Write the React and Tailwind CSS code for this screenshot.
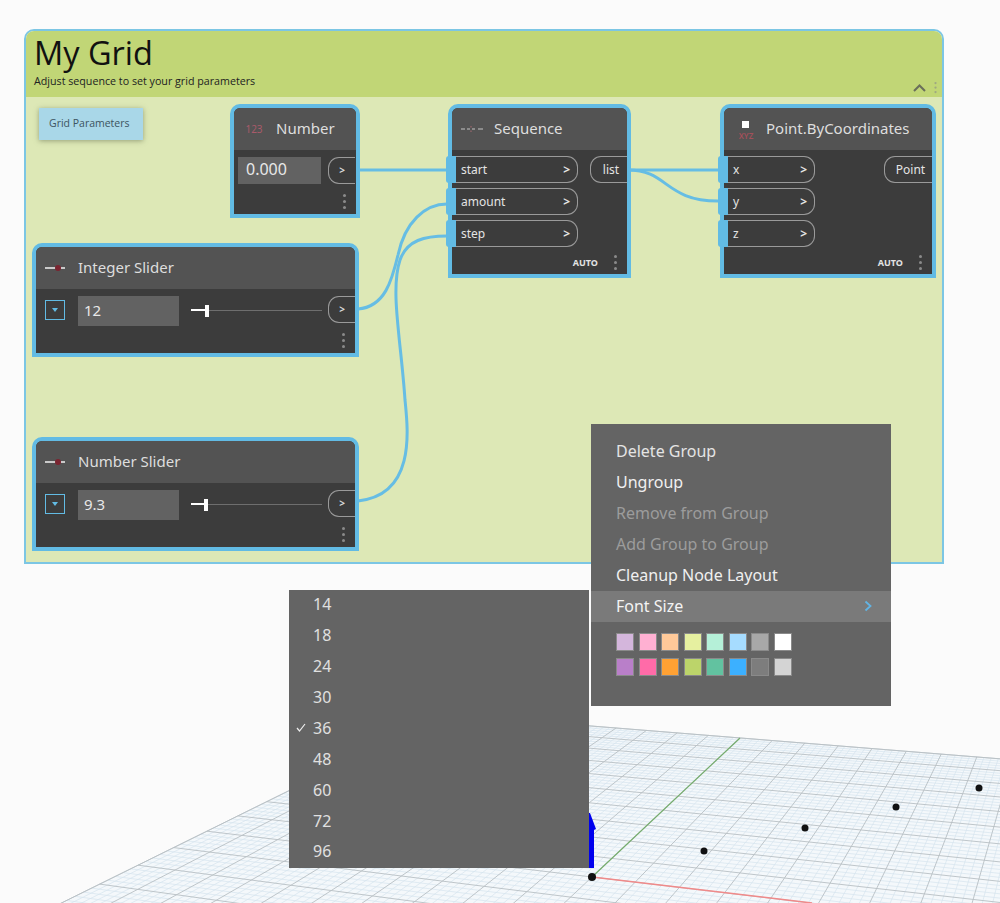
import React from 'react';

const BLUE = 'border-[#62bbe4]';

// plane projection: u goes along the red axis, v along the green one
const project = (u, v) => {
  const a = -0.1098 * u;
  const b = 0.3885 * v;
  const w = 1 + a + b;
  return [(592 - 3300 * a + 1121 * b) / w, (877 + 414 * a + 380 * b) / w];
};

const gridPath = (major) => {
  const per = 10;
  const steps = major ? per : per * 5;
  let d = '';
  for (let i = -steps; i <= steps; i++) {
    if (!major && i % 5 === 0) continue;
    const t = i / steps;
    const [x1, y1] = project(t, -1);
    const [x2, y2] = project(t, 1);
    const [x3, y3] = project(-1, t);
    const [x4, y4] = project(1, t);
    d += `M${x1.toFixed(1)} ${y1.toFixed(1)}L${x2.toFixed(1)} ${y2.toFixed(1)}`;
    d += `M${x3.toFixed(1)} ${y3.toFixed(1)}L${x4.toFixed(1)} ${y4.toFixed(1)}`;
  }
  return d;
};

function Viewport() {
  const corners = [project(-1, -1), project(1, -1), project(1, 1), project(-1, 1)]
    .map((p) => p.map((n) => n.toFixed(1)).join(','))
    .join(' ');
  return (
    <svg className="absolute left-0 top-0 w-[1000px] h-[903px]" viewBox="0 0 1000 903">
      <polygon points={corners} fill="#f4f8fb" stroke="#c9d0d4" strokeWidth="1" />
      <path d={gridPath(false)} stroke="#d6e4ee" strokeWidth="0.7" fill="none" />
      <path d={gridPath(true)} stroke="#b8c0c4" strokeWidth="0.9" fill="none" />
      <line x1="592" y1="877" x2="740" y2="738" stroke="#76ad6e" strokeWidth="1.2" />
      <line x1="592" y1="877" x2="812" y2="903" stroke="#f08a8a" strokeWidth="1.5" />
      <polygon points="589,868 594,868 594,830 596,829 590,813 589,813" fill="#0000ee" />
      <circle cx="592" cy="877" r="4" fill="#111" />
      <circle cx="704" cy="851" r="3.5" fill="#111" />
      <circle cx="805" cy="828" r="3.5" fill="#111" />
      <circle cx="896" cy="807" r="3.5" fill="#111" />
      <circle cx="979" cy="788" r="3.5" fill="#111" />
    </svg>
  );
}

function Dots() {
  return (
    <div className="flex flex-col gap-[3px]">
      <span className="w-[3px] h-[3px] rounded-full bg-[#8a8a8a]"></span>
      <span className="w-[3px] h-[3px] rounded-full bg-[#8a8a8a]"></span>
      <span className="w-[3px] h-[3px] rounded-full bg-[#8a8a8a]"></span>
    </div>
  );
}

function SliderIcon() {
  return (
    <svg width="22" height="8" viewBox="0 0 22 8">
      <line x1="0" y1="4" x2="20" y2="4" stroke="#e8e8e8" strokeWidth="1.6" />
      <circle cx="13" cy="4" r="3" fill="#7a2430" />
    </svg>
  );
}

function SequenceIcon() {
  return (
    <svg width="22" height="8" viewBox="0 0 22 8">
      <path d="M0 4h4M6 4h3M11 4h3M17 4h5" stroke="#c4c4c4" strokeWidth="1.2" />
      <path d="M10 1v1.5M10 5.5v1.5" stroke="#a86a72" strokeWidth="1" />
    </svg>
  );
}

function PointIcon() {
  return (
    <div className="flex flex-col items-center ml-1 mt-1">
      <span className="w-[7px] h-[7px] bg-white"></span>
      <span className="text-[8px] leading-[10px] mt-[3px] text-[#a4505a] font-semibold">XYZ</span>
    </div>
  );
}

function Node({ pos, title, icon, children }) {
  return (
    <div className={`absolute ${pos} flex flex-col border-4 ${BLUE} rounded-t-[10px] bg-[#3c3c3c]`}>
      <div className="h-[42px] shrink-0 flex items-center rounded-t-[6px] bg-[#535353]">
        <div className="w-[40px] shrink-0 flex justify-center">{icon}</div>
        <span className="ml-[2px] pb-[2px] text-[15px] text-[#dedede] whitespace-nowrap">{title}</span>
      </div>
      {children}
    </div>
  );
}

function InPort({ label, width }) {
  return (
    <div className={`relative h-[27px] ${width} flex items-center justify-between pl-[6px] pr-[7px] border border-l-0 border-[#9a9a9a] rounded-r-[11px]`}>
      <span className="absolute -left-[9px] -top-px w-[10px] h-[27px] bg-[#62bbe4] rounded-l-[3px]"></span>
      <span className="text-[12px] text-[#e4e4e4]">{label}</span>
      <span className="text-[12px] font-bold text-[#e4e4e4]">&gt;</span>
    </div>
  );
}

function OutPort({ label, width }) {
  return (
    <div className={`h-[27px] ${width} flex items-center justify-center pl-1 border border-r-0 border-[#9a9a9a] rounded-l-[11px]`}>
      <span className="text-[12px] text-[#e4e4e4]">{label}</span>
    </div>
  );
}

function SmallOut() {
  return (
    <div className="h-[27px] w-[27px] shrink-0 flex items-center justify-center border border-r-0 border-[#9a9a9a] rounded-l-[11px]">
      <span className="text-[10px] font-bold text-[#d8d8d8]">&gt;</span>
    </div>
  );
}

function FunctionFooter() {
  return (
    <div className="mt-auto mb-1 mr-[10px] flex items-center justify-end">
      <span className="mr-[16px] text-[9px] font-bold text-[#e4e4e4]">AUTO</span>
      <Dots />
    </div>
  );
}

function SliderBody({ value, thumb }) {
  return (
    <>
      <div className="flex items-start pt-[7px]">
        <div className="ml-[9px] mt-[4px] w-[20px] h-[20px] shrink-0 flex items-center justify-center border border-[#62bbe4]">
          <span className="w-0 h-0 border-x-[3px] border-x-transparent border-t-[4px] border-t-[#62bbe4]"></span>
        </div>
        <div className="ml-[13px] w-[101px] h-[30px] shrink-0 flex items-center pl-[6px] pb-[2px] bg-[#626262] text-[15px] text-[#e8e8e8]">
          {value}
        </div>
        <div className="relative ml-[12px] mt-[14px] w-[131px] h-px shrink-0 bg-[#6e6e6e]">
          <span className={`absolute left-0 -top-px h-[2px] ${thumb === 13 ? 'w-[13px]' : 'w-[16px]'} bg-white`}></span>
          <span className={`absolute ${thumb === 13 ? 'left-[13px]' : 'left-[14px]'} -top-[5px] w-[4px] h-[12px] bg-white`}></span>
        </div>
        <div className="ml-[6px]">
          <SmallOut />
        </div>
      </div>
      <div className="mt-auto mb-[5px] mr-[10px] flex justify-end">
        <Dots />
      </div>
    </>
  );
}

function Wires() {
  return (
    <svg className="absolute left-0 top-0 w-[916px] h-[465px]" viewBox="26 97 916 465" fill="none">
      <g stroke="#66bde4" strokeWidth="3">
        <path d="M358 170H447" />
        <path d="M358 309C385 307 392 280 398 255C405 222 425 204 447 204" />
        <path d="M358 501C416 495 408 430 405 400C401 340 390 290 400 260C407 240 425 236 447 236" />
        <path d="M628 170H718" />
        <path d="M628 170C668 170 665 201 718 201" />
      </g>
    </svg>
  );
}

function GroupBox() {
  return (
    <div className="ml-[24px] w-[920px] h-[535px] flex flex-col border-2 border-[#7cc6e4] rounded-t-[10px] overflow-hidden">
      <div className="relative h-[66px] shrink-0 pl-[8px] bg-[#c1d676] text-[#111]">
        <div className="text-[32.5px] leading-[42px] mt-[1px] font-['Open_Sans',sans-serif]">My Grid</div>
        <div className="text-[10.7px] leading-[14px] text-[#222] font-['Open_Sans',sans-serif]">
          Adjust sequence to set your grid parameters
        </div>
        <div className="absolute right-[5px] bottom-[2px] flex items-center gap-[8px]">
          <svg width="13" height="8" viewBox="0 0 13 8" fill="none">
            <path d="M1 7l5.5-5.5L12 7" stroke="#6a6f5a" strokeWidth="2" />
          </svg>
          <div className="opacity-60 scale-75">
            <Dots />
          </div>
        </div>
      </div>
      <div className="relative flex-1 bg-[#dde8b6]">
        <Wires />
        <div className="ml-[13px] mt-[11px] w-[104px] h-[32px] flex items-center pl-[10px] bg-[#a9d7e8] shadow-[0_1px_5px_rgba(90,100,70,0.55)] text-[10.5px] text-[#3c5460] font-['Open_Sans',sans-serif]">
          Grid Parameters
        </div>
        <Node pos="left-[204px] top-[7px] w-[130px] h-[114px]" title="Number" icon={<span className="text-[10px] text-[#a95a6a]">123</span>}>
          <div className="flex items-start pt-[7px]">
            <div className="ml-1 w-[83px] h-[27px] shrink-0 flex items-center pl-[8px] pb-[3px] bg-[#626262] text-[16px] text-[#e8e8e8]">0.000</div>
            <div className="ml-[7px]">
              <SmallOut />
            </div>
          </div>
          <div className="mt-auto mb-[5px] mr-[10px] flex justify-end">
            <Dots />
          </div>
        </Node>
        <Node pos="left-[422px] top-[7px] w-[183px] h-[174px]" title="Sequence" icon={<SequenceIcon />}>
          <div className="flex pt-[6px]">
            <div className="ml-[3px] flex flex-col gap-[5px]">
              <InPort label="start" width="w-[123px]" />
              <InPort label="amount" width="w-[123px]" />
              <InPort label="step" width="w-[123px]" />
            </div>
            <div className="ml-auto">
              <OutPort label="list" width="w-[37px]" />
            </div>
          </div>
          <FunctionFooter />
        </Node>
        <Node pos="left-[694px] top-[7px] w-[216px] h-[174px]" title="Point.ByCoordinates" icon={<PointIcon />}>
          <div className="flex pt-[6px]">
            <div className="ml-[3px] flex flex-col gap-[5px]">
              <InPort label="x" width="w-[88px]" />
              <InPort label="y" width="w-[88px]" />
              <InPort label="z" width="w-[88px]" />
            </div>
            <div className="ml-auto">
              <OutPort label="Point" width="w-[48px]" />
            </div>
          </div>
          <FunctionFooter />
        </Node>
        <Node pos="left-[6px] top-[146px] w-[327px] h-[114px]" title="Integer Slider" icon={<SliderIcon />}>
          <SliderBody value="12" thumb={14} />
        </Node>
        <Node pos="left-[6px] top-[340px] w-[327px] h-[114px]" title="Number Slider" icon={<SliderIcon />}>
          <SliderBody value="9.3" thumb={13} />
        </Node>
      </div>
    </div>
  );
}

const swatchesTop = ['bg-[#d4b6dc]', 'bg-[#ffb0d2]', 'bg-[#ffc999]', 'bg-[#e6f0a0]', 'bg-[#b5f0d8]', 'bg-[#a6dcff]', 'bg-[#a8a8a8]', 'bg-[#ffffff]'];
const swatchesBottom = ['bg-[#b97fc9]', 'bg-[#ff6ba8]', 'bg-[#ffa133]', 'bg-[#bcd46a]', 'bg-[#62c2a0]', 'bg-[#3cb0ff]', 'bg-[#7d7d7d]', 'bg-[#d4d4d4]'];

function SwatchRow({ colors }) {
  return (
    <div className="flex gap-[4.5px]">
      {colors.map((c) => (
        <span key={c} className={`w-[18px] h-[18px] ${c} border border-[#8a8a8a]`}></span>
      ))}
    </div>
  );
}

function GroupMenu() {
  const items = [
    ['Delete Group', 'text-[#e4e4e4]'],
    ['Ungroup', 'text-[#f0f0f0]'],
    ['Remove from Group', 'text-[#9c9c9c]'],
    ['Add Group to Group', 'text-[#9c9c9c]'],
    ['Cleanup Node Layout', 'text-[#f0f0f0]'],
  ];
  return (
    <div className="absolute left-[591px] top-[424px] w-[300px] h-[282px] pt-[12px] bg-[#646464] text-[16px] font-['Noto_Sans',sans-serif]">
      {items.map(([label, color]) => (
        <div key={label} className={`h-[31px] flex items-center pl-[25px] pb-[2px] ${color}`}>{label}</div>
      ))}
      <div className="h-[31px] flex items-center justify-between pl-[25px] pr-[19px] pb-[2px] bg-[#7a7a7a] text-[#f4f4f4]">
        Font Size
        <svg width="8" height="12" viewBox="0 0 8 12" fill="none">
          <path d="M1.5 1.5L6.5 6l-5 4.5" stroke="#62b4e4" strokeWidth="1.8" />
        </svg>
      </div>
      <div className="pl-[25px] pt-[11px] flex flex-col gap-[7px]">
        <SwatchRow colors={swatchesTop} />
        <SwatchRow colors={swatchesBottom} />
      </div>
    </div>
  );
}

function FontSizeMenu() {
  const sizes = ['14', '18', '24', '30', '36', '48', '60', '72', '96'];
  return (
    <div className="absolute left-[289px] top-[590px] w-[300px] h-[278px] bg-[#646464] text-[16px] text-[#e0e0e0] font-['Noto_Sans',sans-serif]">
      {sizes.map((s) => (
        <div key={s} className="h-[30.875px] flex items-center pb-[2px]">
          <div className="w-[24px] flex justify-center">
            {s === '36' && (
              <svg width="10" height="9" viewBox="0 0 10 9" fill="none">
                <path d="M1 5l2.5 3L9 1" stroke="#eeeeee" strokeWidth="1.2" />
              </svg>
            )}
          </div>
          <span>{s}</span>
        </div>
      ))}
    </div>
  );
}

export default function App() {
  return (
    <div className="relative w-[1000px] h-[903px] overflow-hidden bg-[#fbfbfb] font-['Noto_Sans',sans-serif]">
      <Viewport />
      <div className="relative pt-[29px]">
        <GroupBox />
      </div>
      <GroupMenu />
      <FontSizeMenu />
    </div>
  );
}
